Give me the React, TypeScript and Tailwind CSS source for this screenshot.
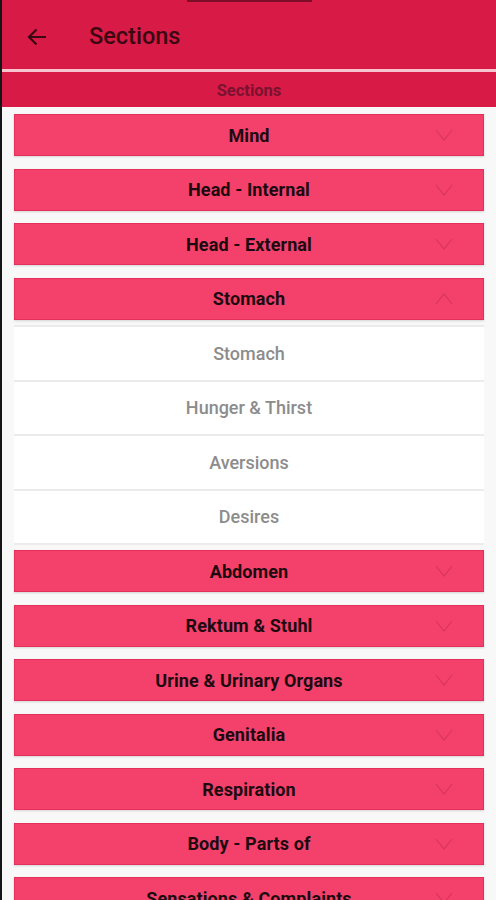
import React from "react";

const Chevron = ({ up }: { up?: boolean }) => (
  <svg width="18" height="12" viewBox="0 0 18 12" className="absolute right-[30px] top-1/2 -translate-y-1/2">
    <polyline
      points={up ? "1,11 9,1 17,11" : "1,1 9,11 17,1"}
      fill="none"
      stroke="#d7355d"
      strokeWidth="1.2"
    />
  </svg>
);

const Section = ({ label, up }: { label: string; up?: boolean }) => (
  <div className="h-[54.5px] pt-[5px]">
    <div className="relative h-[42px] bg-[#f4416c] border border-[#e5305b] shadow-[0_1px_2px_rgba(0,0,0,0.15)] flex items-center justify-center">
      <span className="text-[18px] font-bold text-[#1c0a10] tracking-[0.1px]">{label}</span>
      <Chevron up={up} />
    </div>
  </div>
);

const Sub = ({ label }: { label: string }) => (
  <div className="h-[54.5px] bg-white border-b-[2px] border-[#ebebeb] flex items-center justify-center">
    <span className="text-[18px] font-medium text-[#8c8c8c]">{label}</span>
  </div>
);

export default function App() {
  return (
    <div className="h-[900px] w-[496px] overflow-hidden bg-[#f8f8f8] border-l-[2px] border-[#151515] flex flex-col" style={{ fontFamily: "Roboto, 'Noto Sans', sans-serif" }}>
      <div className="h-[69px] bg-[#d81a47] flex flex-col shrink-0">
        <div className="mx-auto h-[2px] w-[125px] bg-[#7e0d27]" />
        <div className="flex items-center h-[67px] pt-[3px]">
          <svg width="20" height="18" viewBox="0 0 20 18" className="ml-[25px]">
            <path d="M19 9H2.5M9.5 1.5L2 9l7.5 7.5" fill="none" stroke="#3a0712" strokeWidth="2.2" />
          </svg>
          <span className="ml-[42px] text-[23.5px] font-medium text-[#3a0712]">Sections</span>
        </div>
      </div>
      <div className="h-[3px] bg-[#f7c3cf] shrink-0" />
      <div className="h-[35px] bg-[#d81a47] flex items-center justify-center shrink-0 pt-[4px]">
        <span className="text-[16.5px] font-bold text-[#7a1230]">Sections</span>
      </div>
      <div className="px-[12px] pt-[2px] flex flex-col">
        <Section label="Mind" />
        <Section label="Head - Internal" />
        <Section label="Head - External" />
        <Section label="Stomach" up />
        <div className="border-t-[2px] border-[#ebebeb] -mt-[2px]" />
        <Sub label="Stomach" />
        <Sub label="Hunger & Thirst" />
        <Sub label="Aversions" />
        <Sub label="Desires" />
        <Section label="Abdomen" />
        <Section label="Rektum & Stuhl" />
        <Section label="Urine & Urinary Organs" />
        <Section label="Genitalia" />
        <Section label="Respiration" />
        <Section label="Body - Parts of" />
        <Section label="Sensations & Complaints" />
      </div>
    </div>
  );
}
